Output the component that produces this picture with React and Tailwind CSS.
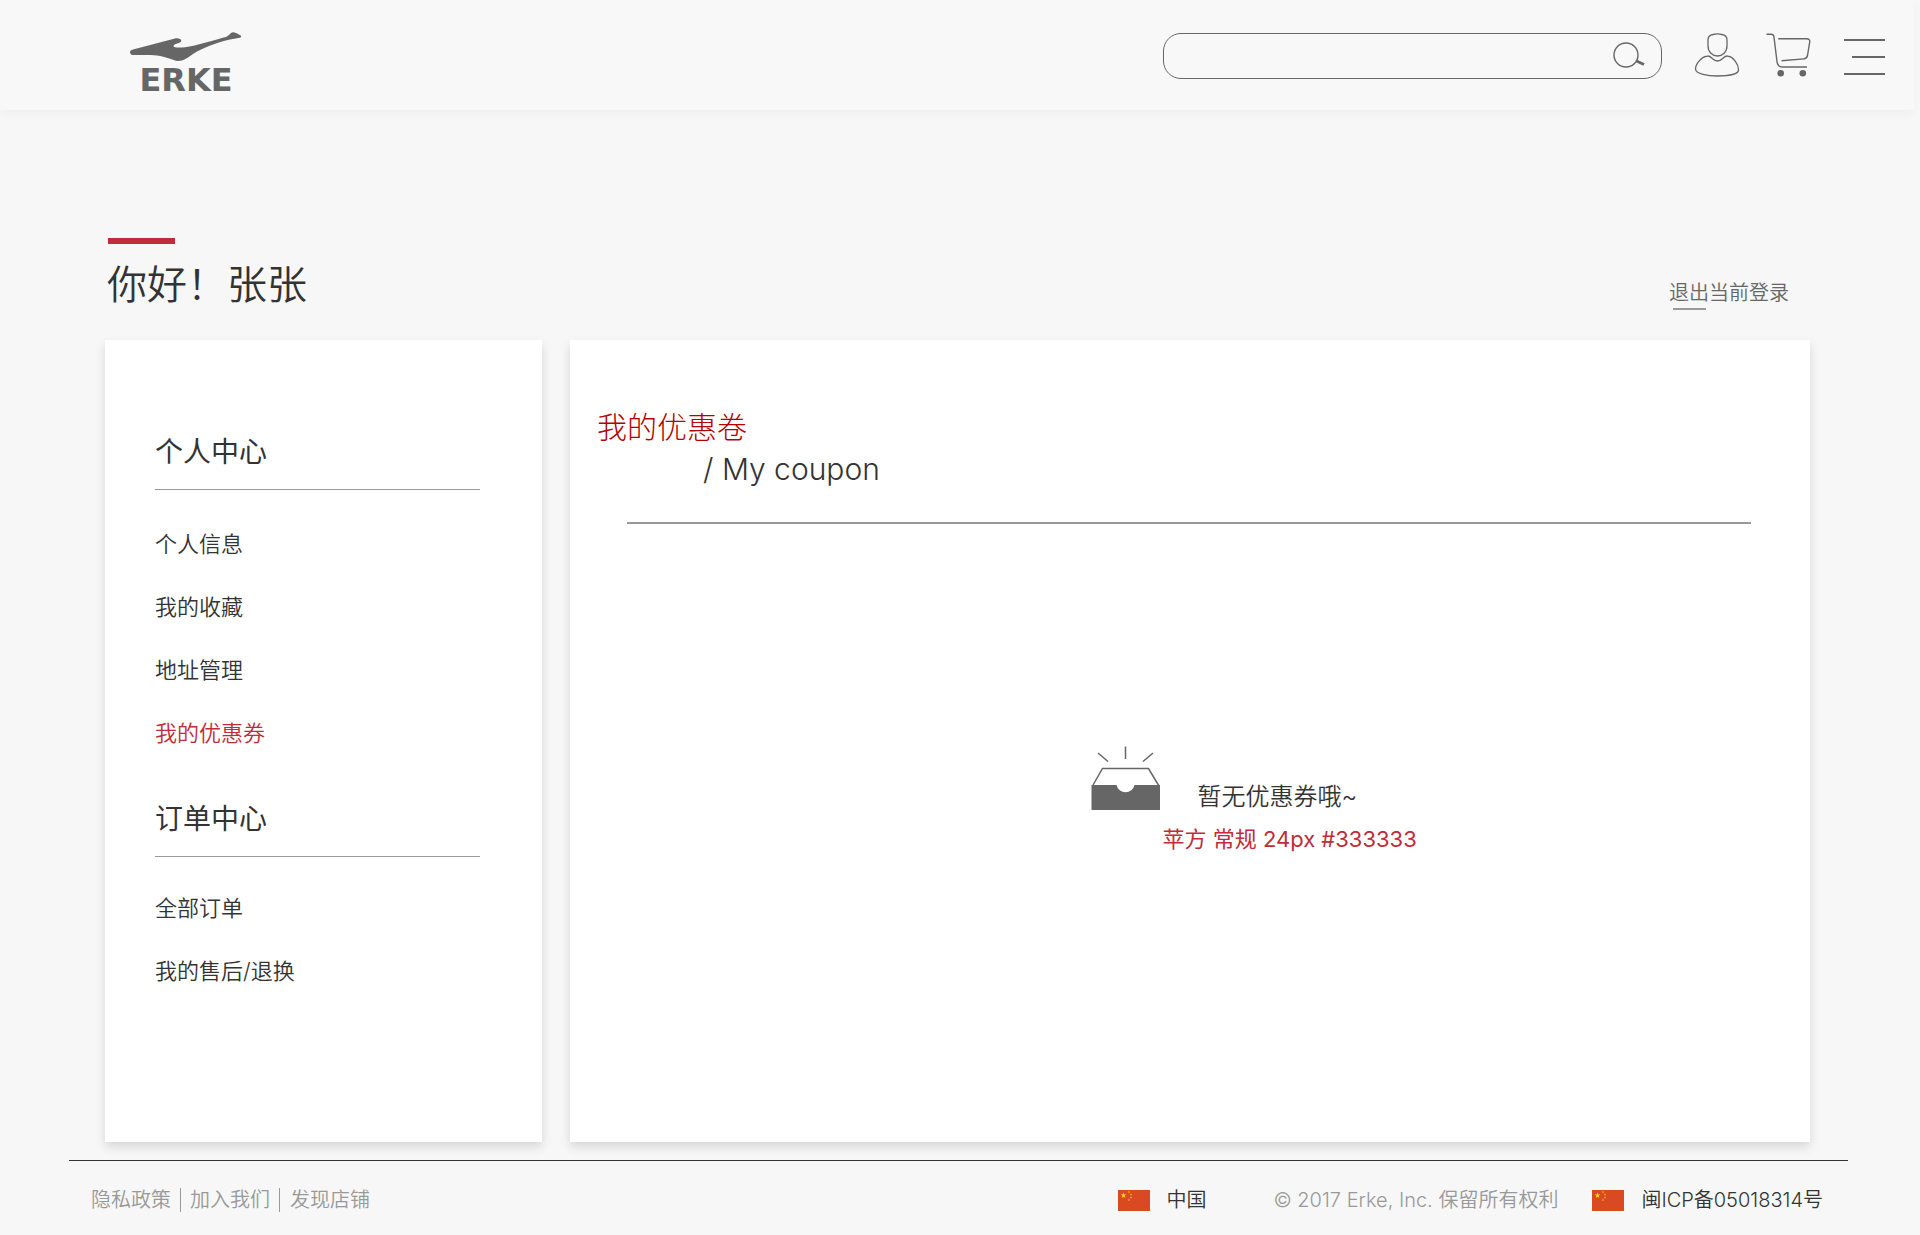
import React from "react";

const accountLinks = [
  { label: "个人信息" },
  { label: "我的收藏" },
  { label: "地址管理" },
  { label: "我的优惠券", active: true },
];

const orderLinks = [{ label: "全部订单" }, { label: "我的售后/退换" }];

function Logo() {
  return (
    <a href="#" aria-label="ERKE" className="flex w-[112px] flex-col items-center text-[#666]">
      <svg width="112" height="30" viewBox="0 0 112 30" fill="currentColor" aria-hidden="true">
        <path d="M0 20 C0 18.500 1 18 3 17.400 L45 6.600 C48 5.800 51.500 7 51.300 9 C51 11.500 43.500 11.500 43.500 14 C43.500 16 50 15.600 55 15.200 C66 14 86 7.500 96 5 C99 4 100 .8 103 .3 C105 0 109 2.600 111 3.800 C111.400 4.600 111 5.400 110 5.700 L100 7.600 C86 10.500 72 16.500 63 22 C58 25.500 53 29.500 47 29 C42 28 36 24.500 27 23.500 C18 22.800 10 23.300 3 23 C.8 22.800 0 21.500 0 20 Z" />
      </svg>
      <span className="mt-0.5 font-['DejaVu_Sans',sans-serif] text-[32px] leading-8 font-bold">ERKE</span>
    </a>
  );
}

function UserIcon() {
  return (
    <svg width="46" height="46" viewBox="0 0 46 46" fill="none" stroke="#666" strokeWidth="1.3" aria-hidden="true">
      <path d="M19 1.500 C21.500 .8 25.500 .8 28 1.500 C31.500 2 33 4 33 7 V13 C33 19 28.500 23 23.500 23 C18.500 23 14 19 14 13 V7 C14 4 15.500 2 19 1.500 Z" />
      <path d="M13.500 23 C17.500 22.500 18.500 28 23.500 28 C28.500 28 29.500 22.500 33.500 23 C39 23.500 44.500 31 44.500 37 C44.500 41.500 33 43 23.500 43 C14 43 1.500 41 1.500 36 C1.500 31 7.500 23.500 13.500 23 Z" />
    </svg>
  );
}

function CartIcon() {
  return (
    <svg width="46" height="46" viewBox="0 0 46 46" fill="none" stroke="#666" strokeWidth="1.4" aria-hidden="true">
      <path d="M.5 1.200 H5 C7 1.200 7.700 1.500 7.900 3.500 L11 28.500 C11.400 32 13 34 16 34 H41" />
      <path d="M12.200 5.700 H40.500 C43.200 5.700 44 7 43.700 9 L41.500 22.500 C41 25 40 25.700 38 25.900 L15.500 27.700" />
      <circle cx="14.700" cy="40.300" r="3.300" fill="#666" stroke="none" />
      <circle cx="36.800" cy="40.300" r="3.300" fill="#666" stroke="none" />
    </svg>
  );
}

function Header() {
  return (
    <header className="mr-1.5 flex h-[110px] items-start justify-between bg-[#f8f8f8] pr-[29px] pl-[130px] shadow-[0_5px_8px_rgba(0,0,0,0.03)]">
      <div className="pt-8">
        <Logo />
      </div>
      <div className="flex items-start pt-[33px]">
        <form className="flex h-[46px] w-[499px] items-center rounded-[18px] border border-[#666] pr-4">
          <input
            type="search"
            aria-label="搜索"
            className="h-full min-w-0 flex-1 bg-transparent px-4 text-xl text-[#333] outline-none"
          />
          <button type="button" aria-label="搜索">
            <svg width="32" height="28" viewBox="0 0 32 28" fill="none" stroke="#666" aria-hidden="true">
              <circle cx="13" cy="13" r="12" strokeWidth="1.400" />
              <path d="M23.500 19 L31 22.500" strokeWidth="2.600" />
            </svg>
          </button>
        </form>
        <button type="button" aria-label="用户" className="ml-8">
          <UserIcon />
        </button>
        <button type="button" aria-label="购物车" className="ml-[26px]">
          <CartIcon />
        </button>
        <button type="button" aria-label="菜单" className="ml-8 flex h-[46px] w-[41px] flex-col items-end pt-1.5">
          <span className="h-0.5 w-full bg-[#666]" />
          <span className="mt-[15px] h-0.5 w-[33px] bg-[#666]" />
          <span className="mt-[15px] h-0.5 w-full bg-[#666]" />
        </button>
      </div>
    </header>
  );
}

function NavSection({ title, links, listClass }) {
  return (
    <section>
      <h2 className="w-[325px] border-b border-[#999] pt-px pb-[17px] text-[28px] leading-10">{title}</h2>
      <ul className={listClass}>
        {links.map((link) => (
          <li key={link.label} className="flex h-[63px] items-center">
            <a
              href="#"
              aria-current={link.active ? "page" : undefined}
              className={link.active ? "text-[22px] font-[350] text-[#c02c38]" : "text-[22px] font-[350]"}
            >
              {link.label}
            </a>
          </li>
        ))}
      </ul>
    </section>
  );
}

function EmptyBoxIcon() {
  return (
    <svg width="70" height="66" viewBox="0 0 70 66" fill="none" stroke="#666" aria-hidden="true">
      <path d="M7 7 L17 15.500 M34.500 .5 V13 M62 7 L52 15.500" strokeWidth="1.500" />
      <path d="M1.500 40 L11.500 22.500 H57.500 L68 40" strokeWidth="1.500" />
      <path d="M.5 39 H25.500 A9.200 9.200 0 0 0 43.500 39 H69 V64 H.5 Z" fill="#666" stroke="none" />
    </svg>
  );
}

const STAR = "M0 -1 L.225 -.309 L.951 -.309 L.363 .118 L.588 .809 L0 .382 L-.588 .809 L-.363 .118 L-.951 -.309 L-.225 -.309 Z";

function Flag() {
  return (
    <svg width="32" height="21" viewBox="0 0 32 21" aria-hidden="true" className="shrink-0">
      <rect width="32" height="21" fill="#d94a22" />
      <g fill="#fadf11">
        <path d={STAR} transform="translate(5.500 5.500) scale(3)" />
        <path d={STAR} transform="translate(11 2) scale(1.200)" />
        <path d={STAR} transform="translate(13 4.500) scale(1.200)" />
        <path d={STAR} transform="translate(13 7.500) scale(1.200)" />
        <path d={STAR} transform="translate(11 10) scale(1.200)" />
      </g>
    </svg>
  );
}

export default function App() {
  return (
    <div className="flex min-h-screen flex-col bg-[#f7f7f7] font-[Inter,'Noto_Sans_CJK_SC',sans-serif] text-[#333]">
      <Header />

      <div className="mt-32 mr-[131px] ml-[107px] flex items-start justify-between">
        <div>
          <div className="ml-px h-1.5 w-[67px] bg-[#c02c38]" />
          <h1 className="mt-[11px] text-[40px] leading-[60px] font-[350]">你好！张张</h1>
        </div>
        <a href="#" className="mt-[41px] text-xl leading-[29px] font-[350] text-[#666]">
          退出当前登录
          <span className="ml-1 block h-0.5 w-[33px] bg-[#999]" />
        </a>
      </div>

      <div className="mt-[25px] mr-[110px] ml-[105px] flex min-h-[802px] items-stretch gap-7">
        <nav
          aria-label="个人中心"
          className="flex w-[437px] shrink-0 flex-col gap-[33px] bg-white pt-[91px] pl-[50px] shadow-[0_5px_10px_rgba(0,0,0,0.13)]"
        >
          <NavSection title="个人中心" links={accountLinks} listClass="mt-[23px]" />
          <NavSection title="订单中心" links={orderLinks} listClass="mt-5" />
        </nav>

        <main className="min-w-0 flex-1 bg-white pt-[66px] shadow-[0_5px_10px_rgba(0,0,0,0.13)]">
          <div className="pl-[27px] text-[30px] leading-[42px] font-light">
            <h2 className="text-[#b30000]">我的优惠卷</h2>
            <p className="pl-[106px]">/ My coupon</p>
          </div>
          <hr className="mt-8 mr-[59px] ml-[57px] border-t-2 border-[#999]" />
          <div className="mt-[222px] flex justify-center pl-[181px]">
            <div className="flex w-[380px] flex-wrap items-end">
              <EmptyBoxIcon />
              <div className="flex-1">
                <p className="pl-[37px] text-2xl leading-[30px] font-[350]">暂无优惠券哦~</p>
              </div>
              <p className="mt-[11px] w-full pl-[72px] text-[22px] leading-8 text-[#c02c38]">苹方 常规 24px #333333</p>
            </div>
          </div>
        </main>
      </div>

      <footer className="mt-[18px] mr-[72px] ml-[69px] flex justify-between border-t border-[#333] pt-[27px] pr-[25px] pb-[22px] pl-[22px] text-xl leading-6 font-[350]">
        <nav aria-label="页脚" className="flex text-[#999]">
          <a href="#" className="pr-[9px]">隐私政策</a>
          <a href="#" className="border-l border-[#999] px-[9px]">加入我们</a>
          <a href="#" className="border-l border-[#999] pl-[10px]">发现店铺</a>
        </nav>
        <div className="flex items-center">
          <Flag />
          <span className="ml-4">中国</span>
          <small className="ml-[67px] text-xl leading-6 text-[#999]">© 2017 Erke, Inc. 保留所有权利</small>
          <a href="#" className="ml-[34px] flex items-center gap-[17px]">
            <Flag />
            闽ICP备05018314号
          </a>
        </div>
      </footer>
    </div>
  );
}
